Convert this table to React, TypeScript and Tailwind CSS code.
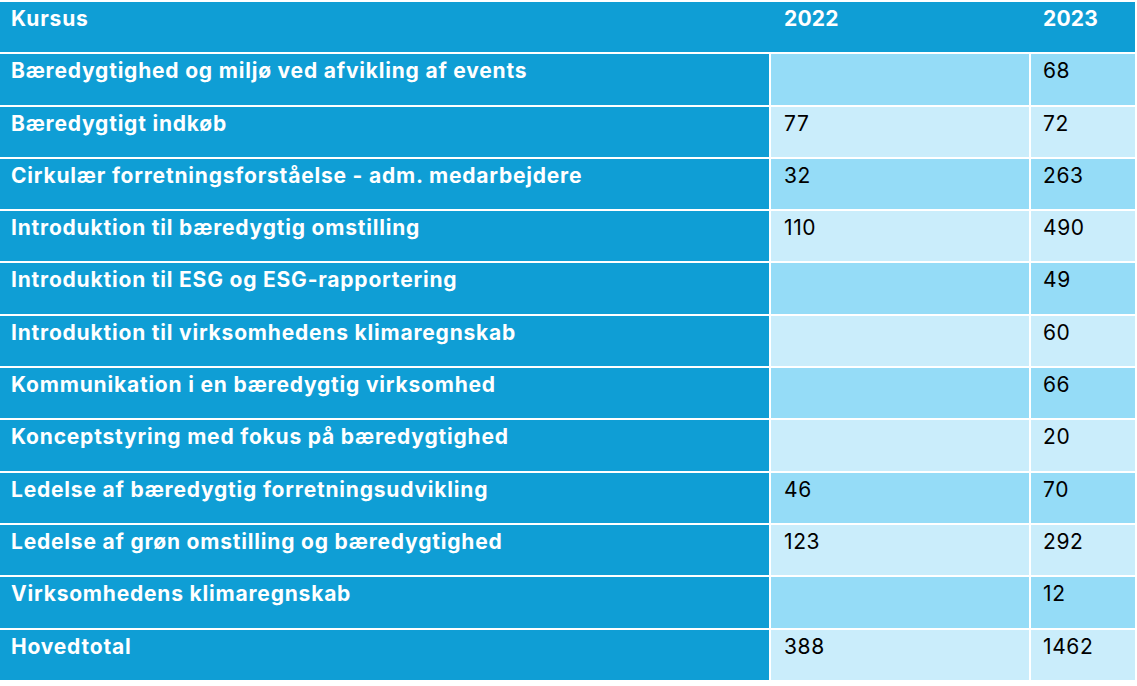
import React from "react";

const rows: [string, string, string][] = [
  ["Bæredygtighed og miljø ved afvikling af events", "", "68"],
  ["Bæredygtigt indkøb", "77", "72"],
  ["Cirkulær forretningsforståelse - adm. medarbejdere", "32", "263"],
  ["Introduktion til bæredygtig omstilling", "110", "490"],
  ["Introduktion til ESG og ESG-rapportering", "", "49"],
  ["Introduktion til virksomhedens klimaregnskab", "", "60"],
  ["Kommunikation i en bæredygtig virksomhed", "", "66"],
  ["Konceptstyring med fokus på bæredygtighed", "", "20"],
  ["Ledelse af bæredygtig forretningsudvikling", "46", "70"],
  ["Ledelse af grøn omstilling og bæredygtighed", "123", "292"],
  ["Virksomhedens klimaregnskab", "", "12"],
  ["Hovedtotal", "388", "1462"],
];

export default function App() {
  return (
    <div
      className="w-[1137px] h-[686px] bg-white overflow-hidden"
      style={{ fontFamily: 'Inter, "Liberation Sans", Arial, sans-serif' }}
    >
      <div className="flex flex-col gap-[2px] pt-[2px] pr-[2px]">
        <div className="grid grid-cols-[769px_258px_104px] gap-[2px] h-[50.3px] bg-[#0F9ED5] text-white font-bold text-[21px] leading-[21px]">
          <div className="pl-[11px] pt-[6px] tracking-[0.85px]">Kursus</div>
          <div className="pl-[13px] pt-[6px] tracking-[0.2px]">2022</div>
          <div className="pl-[12px] pt-[6px] tracking-[0.2px]">2023</div>
        </div>
        {rows.map(([name, a, b], i) => {
          const bg = i % 2 === 0 ? "bg-[#95DCF7]" : "bg-[#CAEDFB]";
          return (
            <div
              key={name}
              className="grid grid-cols-[769px_258px_104px] gap-[2px] h-[50.3px] text-[21px] leading-[21px]"
            >
              <div className="bg-[#0F9ED5] text-white font-bold pl-[11px] pt-[6px] whitespace-nowrap tracking-[0.8px]">
                {name}
              </div>
              <div className={`${bg} text-black pl-[13px] pt-[6px] tracking-[0.6px]`}>{a}</div>
              <div className={`${bg} text-black pl-[12px] pt-[6px] tracking-[0.6px]`}>{b}</div>
            </div>
          );
        })}
      </div>
    </div>
  );
}
